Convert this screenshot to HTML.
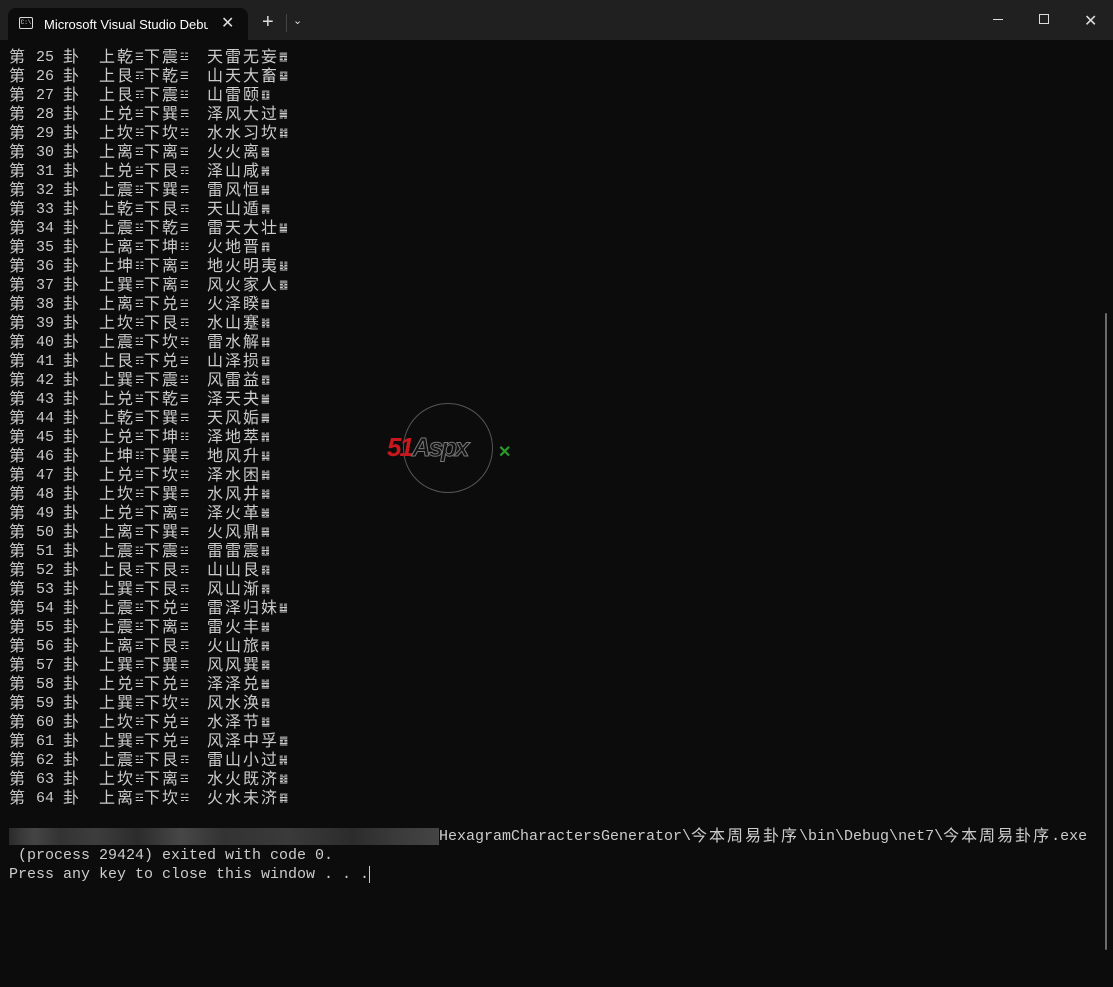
<!DOCTYPE html>
<html><head><meta charset="utf-8"><style>
html,body{margin:0;padding:0;width:1113px;height:987px;background:#0c0c0c;overflow:hidden}
.top{position:absolute;left:0;top:0;width:1113px;height:40px;background:#202020}
.tab{position:absolute;left:8px;top:8px;width:240px;height:32px;background:#0c0c0c;border-radius:8px 8px 0 0}
.tt{position:absolute;left:44px;top:17px;font:13px "Liberation Sans",sans-serif;color:#fff;white-space:nowrap;width:164px;overflow:hidden}
.ico{position:absolute;left:19px;top:17px;width:12px;height:10px;border:1px solid #ddd;border-radius:2px;font:6px "Liberation Mono",monospace;color:#ddd;line-height:10px;text-align:center}
.x{position:absolute;color:#ddd;font:16px "Liberation Sans",sans-serif}
#t{position:absolute;left:9px;top:48px;font:15px "Liberation Mono",monospace;color:#cccccc;line-height:19px}
#t p{margin:0;height:19px;white-space:pre}
c{display:inline-block;width:18px;height:19px;font:16px "Noto Sans CJK SC",sans-serif;line-height:19px;vertical-align:top;position:relative;top:-2px}
s{display:inline-block;width:9px;height:19px;text-decoration:none;font:10px "DejaVu Sans",sans-serif;line-height:19px;vertical-align:top;overflow:hidden}
.blur{display:inline-block;width:430px;height:17px;vertical-align:top;margin-top:1px;background:linear-gradient(90deg,#2a2a2a 0,#3a3a3a 3%,#444 6%,#333 12%,#3d3d3d 20%,#2c2c2c 30%,#474747 40%,#333 50%,#3a3a3a 65%,#2c2c2c 80%,#3a3a3a 90%,#444 100%)}
.sb{position:absolute;left:1105px;top:313px;width:2px;height:637px;background:#6a6a6a;border-radius:1px}
</style></head><body>
<div class="top"></div>
<div class="tab"></div>
<div class="ico">C:\</div>
<div class="tt">Microsoft Visual Studio Debug</div>
<div class="x" style="left:221px;top:13px">✕</div>
<div class="x" style="left:262px;top:11px;font-size:20px">+</div>
<div style="position:absolute;left:286px;top:14px;width:1px;height:18px;background:#444"></div>
<div class="x" style="left:293px;top:14px;font-size:11px">⌄</div>
<div style="position:absolute;left:993px;top:19px;width:10px;height:1px;background:#ddd"></div>
<div style="position:absolute;left:1039px;top:14px;width:8px;height:8px;border:1px solid #ddd"></div>
<div class="x" style="left:1084px;top:11px">✕</div>
<div id="t"><p><c>第</c> 25 <c>卦</c>  <c>上</c><c>乾</c><s>☰</s><c>下</c><c>震</c><s>☳</s>  <c>天</c><c>雷</c><c>无</c><c>妄</c><s>䷘</s></p><p><c>第</c> 26 <c>卦</c>  <c>上</c><c>艮</c><s>☶</s><c>下</c><c>乾</c><s>☰</s>  <c>山</c><c>天</c><c>大</c><c>畜</c><s>䷙</s></p><p><c>第</c> 27 <c>卦</c>  <c>上</c><c>艮</c><s>☶</s><c>下</c><c>震</c><s>☳</s>  <c>山</c><c>雷</c><c>颐</c><s>䷚</s></p><p><c>第</c> 28 <c>卦</c>  <c>上</c><c>兑</c><s>☱</s><c>下</c><c>巽</c><s>☴</s>  <c>泽</c><c>风</c><c>大</c><c>过</c><s>䷛</s></p><p><c>第</c> 29 <c>卦</c>  <c>上</c><c>坎</c><s>☵</s><c>下</c><c>坎</c><s>☵</s>  <c>水</c><c>水</c><c>习</c><c>坎</c><s>䷜</s></p><p><c>第</c> 30 <c>卦</c>  <c>上</c><c>离</c><s>☲</s><c>下</c><c>离</c><s>☲</s>  <c>火</c><c>火</c><c>离</c><s>䷝</s></p><p><c>第</c> 31 <c>卦</c>  <c>上</c><c>兑</c><s>☱</s><c>下</c><c>艮</c><s>☶</s>  <c>泽</c><c>山</c><c>咸</c><s>䷞</s></p><p><c>第</c> 32 <c>卦</c>  <c>上</c><c>震</c><s>☳</s><c>下</c><c>巽</c><s>☴</s>  <c>雷</c><c>风</c><c>恒</c><s>䷟</s></p><p><c>第</c> 33 <c>卦</c>  <c>上</c><c>乾</c><s>☰</s><c>下</c><c>艮</c><s>☶</s>  <c>天</c><c>山</c><c>遁</c><s>䷠</s></p><p><c>第</c> 34 <c>卦</c>  <c>上</c><c>震</c><s>☳</s><c>下</c><c>乾</c><s>☰</s>  <c>雷</c><c>天</c><c>大</c><c>壮</c><s>䷡</s></p><p><c>第</c> 35 <c>卦</c>  <c>上</c><c>离</c><s>☲</s><c>下</c><c>坤</c><s>☷</s>  <c>火</c><c>地</c><c>晋</c><s>䷢</s></p><p><c>第</c> 36 <c>卦</c>  <c>上</c><c>坤</c><s>☷</s><c>下</c><c>离</c><s>☲</s>  <c>地</c><c>火</c><c>明</c><c>夷</c><s>䷣</s></p><p><c>第</c> 37 <c>卦</c>  <c>上</c><c>巽</c><s>☴</s><c>下</c><c>离</c><s>☲</s>  <c>风</c><c>火</c><c>家</c><c>人</c><s>䷤</s></p><p><c>第</c> 38 <c>卦</c>  <c>上</c><c>离</c><s>☲</s><c>下</c><c>兑</c><s>☱</s>  <c>火</c><c>泽</c><c>睽</c><s>䷥</s></p><p><c>第</c> 39 <c>卦</c>  <c>上</c><c>坎</c><s>☵</s><c>下</c><c>艮</c><s>☶</s>  <c>水</c><c>山</c><c>蹇</c><s>䷦</s></p><p><c>第</c> 40 <c>卦</c>  <c>上</c><c>震</c><s>☳</s><c>下</c><c>坎</c><s>☵</s>  <c>雷</c><c>水</c><c>解</c><s>䷧</s></p><p><c>第</c> 41 <c>卦</c>  <c>上</c><c>艮</c><s>☶</s><c>下</c><c>兑</c><s>☱</s>  <c>山</c><c>泽</c><c>损</c><s>䷨</s></p><p><c>第</c> 42 <c>卦</c>  <c>上</c><c>巽</c><s>☴</s><c>下</c><c>震</c><s>☳</s>  <c>风</c><c>雷</c><c>益</c><s>䷩</s></p><p><c>第</c> 43 <c>卦</c>  <c>上</c><c>兑</c><s>☱</s><c>下</c><c>乾</c><s>☰</s>  <c>泽</c><c>天</c><c>夬</c><s>䷪</s></p><p><c>第</c> 44 <c>卦</c>  <c>上</c><c>乾</c><s>☰</s><c>下</c><c>巽</c><s>☴</s>  <c>天</c><c>风</c><c>姤</c><s>䷫</s></p><p><c>第</c> 45 <c>卦</c>  <c>上</c><c>兑</c><s>☱</s><c>下</c><c>坤</c><s>☷</s>  <c>泽</c><c>地</c><c>萃</c><s>䷬</s></p><p><c>第</c> 46 <c>卦</c>  <c>上</c><c>坤</c><s>☷</s><c>下</c><c>巽</c><s>☴</s>  <c>地</c><c>风</c><c>升</c><s>䷭</s></p><p><c>第</c> 47 <c>卦</c>  <c>上</c><c>兑</c><s>☱</s><c>下</c><c>坎</c><s>☵</s>  <c>泽</c><c>水</c><c>困</c><s>䷮</s></p><p><c>第</c> 48 <c>卦</c>  <c>上</c><c>坎</c><s>☵</s><c>下</c><c>巽</c><s>☴</s>  <c>水</c><c>风</c><c>井</c><s>䷯</s></p><p><c>第</c> 49 <c>卦</c>  <c>上</c><c>兑</c><s>☱</s><c>下</c><c>离</c><s>☲</s>  <c>泽</c><c>火</c><c>革</c><s>䷰</s></p><p><c>第</c> 50 <c>卦</c>  <c>上</c><c>离</c><s>☲</s><c>下</c><c>巽</c><s>☴</s>  <c>火</c><c>风</c><c>鼎</c><s>䷱</s></p><p><c>第</c> 51 <c>卦</c>  <c>上</c><c>震</c><s>☳</s><c>下</c><c>震</c><s>☳</s>  <c>雷</c><c>雷</c><c>震</c><s>䷲</s></p><p><c>第</c> 52 <c>卦</c>  <c>上</c><c>艮</c><s>☶</s><c>下</c><c>艮</c><s>☶</s>  <c>山</c><c>山</c><c>艮</c><s>䷳</s></p><p><c>第</c> 53 <c>卦</c>  <c>上</c><c>巽</c><s>☴</s><c>下</c><c>艮</c><s>☶</s>  <c>风</c><c>山</c><c>渐</c><s>䷴</s></p><p><c>第</c> 54 <c>卦</c>  <c>上</c><c>震</c><s>☳</s><c>下</c><c>兑</c><s>☱</s>  <c>雷</c><c>泽</c><c>归</c><c>妹</c><s>䷵</s></p><p><c>第</c> 55 <c>卦</c>  <c>上</c><c>震</c><s>☳</s><c>下</c><c>离</c><s>☲</s>  <c>雷</c><c>火</c><c>丰</c><s>䷶</s></p><p><c>第</c> 56 <c>卦</c>  <c>上</c><c>离</c><s>☲</s><c>下</c><c>艮</c><s>☶</s>  <c>火</c><c>山</c><c>旅</c><s>䷷</s></p><p><c>第</c> 57 <c>卦</c>  <c>上</c><c>巽</c><s>☴</s><c>下</c><c>巽</c><s>☴</s>  <c>风</c><c>风</c><c>巽</c><s>䷸</s></p><p><c>第</c> 58 <c>卦</c>  <c>上</c><c>兑</c><s>☱</s><c>下</c><c>兑</c><s>☱</s>  <c>泽</c><c>泽</c><c>兑</c><s>䷹</s></p><p><c>第</c> 59 <c>卦</c>  <c>上</c><c>巽</c><s>☴</s><c>下</c><c>坎</c><s>☵</s>  <c>风</c><c>水</c><c>涣</c><s>䷺</s></p><p><c>第</c> 60 <c>卦</c>  <c>上</c><c>坎</c><s>☵</s><c>下</c><c>兑</c><s>☱</s>  <c>水</c><c>泽</c><c>节</c><s>䷻</s></p><p><c>第</c> 61 <c>卦</c>  <c>上</c><c>巽</c><s>☴</s><c>下</c><c>兑</c><s>☱</s>  <c>风</c><c>泽</c><c>中</c><c>孚</c><s>䷼</s></p><p><c>第</c> 62 <c>卦</c>  <c>上</c><c>震</c><s>☳</s><c>下</c><c>艮</c><s>☶</s>  <c>雷</c><c>山</c><c>小</c><c>过</c><s>䷽</s></p><p><c>第</c> 63 <c>卦</c>  <c>上</c><c>坎</c><s>☵</s><c>下</c><c>离</c><s>☲</s>  <c>水</c><c>火</c><c>既</c><c>济</c><s>䷾</s></p><p><c>第</c> 64 <c>卦</c>  <c>上</c><c>离</c><s>☲</s><c>下</c><c>坎</c><s>☵</s>  <c>火</c><c>水</c><c>未</c><c>济</c><s>䷿</s></p><p></p><p><span class="blur"></span>HexagramCharactersGenerator\<c>今</c><c>本</c><c>周</c><c>易</c><c>卦</c><c>序</c>\bin\Debug\net7\<c>今</c><c>本</c><c>周</c><c>易</c><c>卦</c><c>序</c>.exe</p><p> (process 29424) exited with code 0.</p><p>Press any key to close this window . . .<span style="display:inline-block;width:1px;height:17px;background:#ccc;vertical-align:top;margin-top:1px"></span></p></div>
<div style="position:absolute;left:403px;top:403px;width:88px;height:88px;border:1px solid #555;border-radius:50%"></div>
<div style="position:absolute;left:387px;top:432px;font:italic bold 26px 'Liberation Sans',sans-serif;color:#c8181e;letter-spacing:-2px">51<span style="color:#111;-webkit-text-stroke:1px #777">Aspx</span></div>
<div style="position:absolute;left:498px;top:442px;color:#2a9a2a;font:bold 16px 'Liberation Sans',sans-serif">✕</div>
<div class="sb"></div>
</body></html>
